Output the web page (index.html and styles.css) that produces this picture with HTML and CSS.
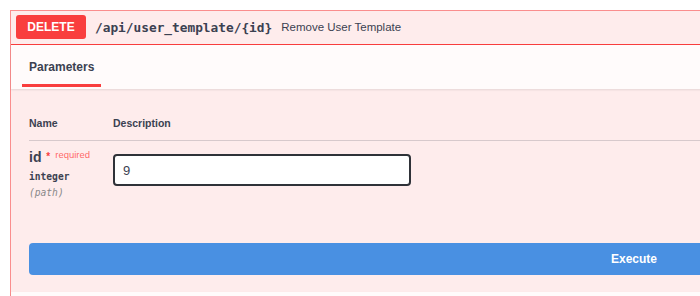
FILE: index.html
```html
<!DOCTYPE html>
<html lang="en">
<head>
  <meta charset="UTF-8" />
  <title>DELETE /api/user_template/{id}</title>
  <link rel="stylesheet" href="styles.css">
</head>
<body>
  <div class="page">
    <div class="opblock">
      <div class="summary">
        <span class="method">DELETE</span>
        <span class="path">/api/user_template/{id}</span>
        <span class="summary-desc">Remove User Template</span>
      </div>

      <div class="section-header">
        <div class="tab">Parameters</div>
      </div>

      <div class="params">
        <div class="param-head">
          <div class="col-name">Name</div>
          <div>Description</div>
        </div>
        <div class="param-row">
          <div class="col-name">
            <div class="param-name">id <span class="star">*</span><span class="required">required</span></div>
            <div class="param-type">integer</div>
            <div class="param-in">(path)</div>
          </div>
          <div class="col-desc">
            <input type="text" class="param-input" value="9" />
          </div>
        </div>
      </div>

      <div class="execute-wrapper">
        <button type="button" class="execute">Execute</button>
      </div>

      <div class="section-header responses"></div>
    </div>
  </div>
</body>
</html>
```

FILE: styles.css
```css
html {
  overflow: hidden;
}

body {
  margin: 10px 0 0 10px;
  font-family: 'Liberation Sans', Arial, sans-serif;
  color: #3b4151;
  background: #fff;
}

.page {
  overflow: hidden;
  padding-top: 3px;
  margin-top: -3px;
  height: 286px;
}

.opblock {
  width: 1248px;
  box-sizing: border-box;
  border: 1px solid #fa8e8e;
  background: #feecec;
  box-shadow: 0 0 3px rgba(0,0,0,0.19);
}

.summary {
  display: flex;
  align-items: center;
  padding: 4px 5px 5px;
  border-bottom: 1px solid #f93e3e;
}

.method {
  width: 70px;
  height: 24px;
  line-height: 24px;
  text-align: center;
  background: #f93e3e;
  color: #fff;
  font-size: 12px;
  font-weight: bold;
  border-radius: 3px;
}

.path {
  margin-left: 9px;
  font-family: 'DejaVu Sans Mono', monospace;
  font-size: 12.8px;
  font-weight: bold;
}

.summary-desc {
  margin-left: 9px;
  font-size: 11.5px;
}

.section-header {
  display: flex;
  height: 44px;
  background: rgba(255,255,255,0.8);
  box-shadow: 0 1px 2px rgba(0,0,0,0.1);
}

.tab {
  margin-left: 11px;
  padding: 4px 7px 0;
  display: flex;
  align-items: center;
  font-size: 12px;
  font-weight: bold;
  border-bottom: 3px solid #f93e3e;
  margin-bottom: 2px;
}

.params {
  padding: 27px 18px 22px;
}

.param-head {
  display: flex;
  font-size: 10.5px;
  font-weight: bold;
  line-height: 14px;
  padding-bottom: 10px;
  border-bottom: 1px solid rgba(59,65,81,0.2);
}

.col-name {
  width: 84px;
  flex-shrink: 0;
}

.param-row {
  display: flex;
  padding-top: 8px;
}

.param-name {
  font-size: 14px;
  font-weight: bold;
  line-height: 16px;
}

.star {
  color: #f93e3e;
  font-size: 10px;
  vertical-align: top;
  margin-left: 1px;
}

.required {
  color: rgba(255,0,0,0.6);
  font-size: 9.5px;
  font-weight: normal;
  vertical-align: top;
  margin-left: 5px;
  position: relative;
  top: -2px;
}

.param-type {
  margin-top: 4px;
  font-family: 'DejaVu Sans Mono', monospace;
  font-size: 9.6px;
  font-weight: bold;
  line-height: 16px;
}

.param-in {
  font-family: 'DejaVu Sans Mono', monospace;
  font-size: 9.6px;
  font-style: italic;
  color: #888;
  line-height: 16px;
}

.col-desc {
  padding-top: 5px;
}

.param-input {
  width: 298px;
  height: 32px;
  box-sizing: border-box;
  border: 2px solid #2f3238;
  border-radius: 4px;
  padding: 0 8px;
  font-family: 'Liberation Sans', Arial, sans-serif;
  font-size: 13px;
  color: #3b4151;
  background: #fff;
  outline: none;
}

.execute-wrapper {
  padding: 20px 18px 17px;
}

.execute {
  width: 100%;
  height: 32px;
  border: none;
  border-radius: 4px;
  background: #4990e2;
  color: #fff;
  font-family: 'Liberation Sans', Arial, sans-serif;
  font-size: 12px;
  font-weight: bold;
}

.responses {
  height: 40px;
}
```
